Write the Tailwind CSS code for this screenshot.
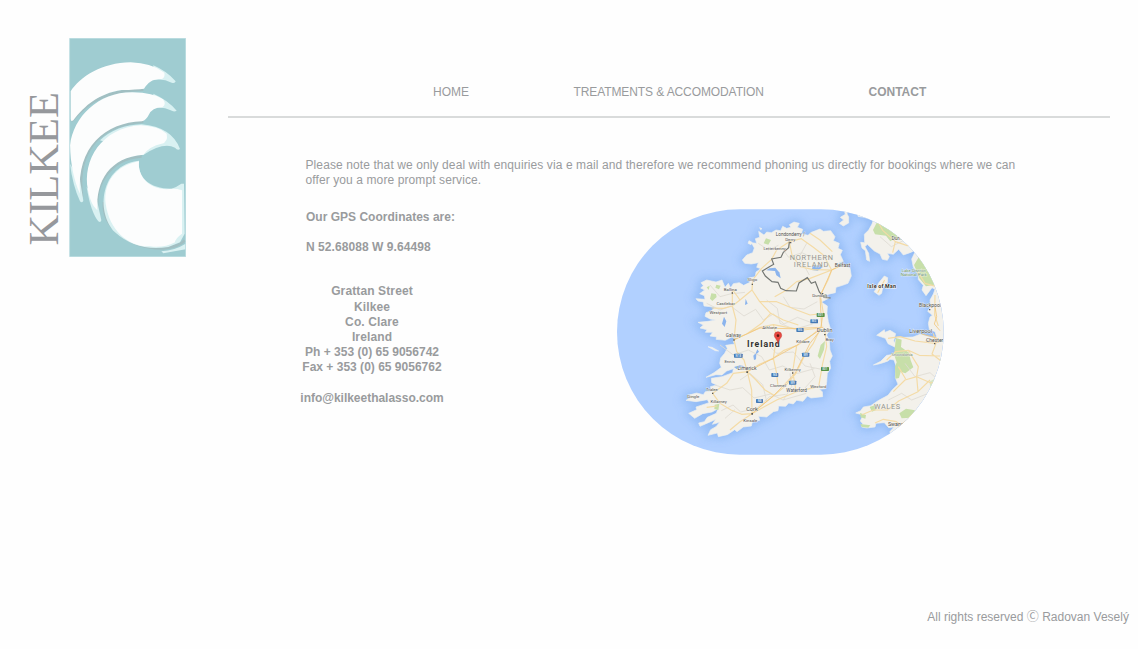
<!DOCTYPE html>
<html lang="en">
<head>
<meta charset="utf-8">
<title>Kilkee - Contact</title>
<script src="https://cdn.jsdelivr.net/npm/@tailwindcss/browser@4"></script>
</head>
<body class="bg-[#fefefe] text-[#999b9d] text-[12px] font-['Liberation_Sans',Arial,sans-serif]">
<div class="flex flex-col w-[1138px] h-[649px] overflow-hidden">
  <div class="flex grow">
    <aside class="w-[228px] shrink-0 pt-[38px] pl-[20px] flex items-start">
      <svg class="w-[48px] h-[219px] shrink-0" viewBox="20 38 48 219" role="img" aria-label="Kilkee">
        <text transform="translate(58 245.5) rotate(-90)" font-family="Liberation Serif, serif" font-size="43" textLength="153.5" lengthAdjust="spacingAndGlyphs" fill="#96989c">KILKEE</text>
      </svg>
      <svg class="w-[117px] h-[219px] ml-px shrink-0" viewBox="147 23 351 657">
        <rect x="149" y="24" width="348" height="655" fill="#9fccd1"/>
        <g fill="none" stroke="#a1bfc2" stroke-width="8">
          <path d="M155 272C210 205 270 180 370 178M186 500C172 400 205 285 370 274M237 560C215 470 265 385 365 378M252 515C245 590 330 656 430 654Q480 648 494 630"/>
        </g>
        <g fill="#d9f1f2">
          <path d="M400 105Q440 122 467 153Q465 160 455 157Q430 144 400 149Z"/>
          <path d="M400 190Q445 210 470 241Q462 246 452 240Q430 228 400 233Z"/>
          <path d="M240 330Q290 284 365 282Q455 290 480 356Q473 362 465 352Q430 334 370 374Z"/>
          <path d="M150 400Q158 465 180 513Q186 519 190 511L180 450Z"/>
          <path d="M200 470Q212 545 235 573Q242 578 244 570L231 510Z"/>
          <path d="M357 391C240 405 226 545 285 606Q350 665 445 650L480 636L494 610L492 460L484 460Q470 470 455 475C385 475 352 438 357 391Z"/>
          <path d="M424 663Q465 660 497 640V657L430 669Z"/>
        </g>
        <g fill="#fcfdfd">
          <path d="M152 183C180 140 245 97 332 96Q395 98 433 127Q436 140 426 146C395 145 385 157 372 175Q350 178 305 179C235 190 195 225 160 270Q152 276 152 265Z"/>
          <path d="M150 345C160 260 235 185 338 186Q400 187 429 207Q440 222 427 231Q396 232 386 254Q379 269 366 273C255 277 170 350 180 490C163 455 151 400 150 345Z"/>
          <path d="M204 480C186 390 245 292 362 285Q416 288 440 310Q445 335 425 340Q390 347 370 373C270 381 227 450 232 540C216 525 209 505 204 480Z"/>
          <path d="M357 393C285 405 250 460 257 520C268 600 325 650 390 648Q430 654 465 636Q465 625 486 610L486 480Q465 473 440 477C385 475 352 438 357 393Z"/>
        </g>
        <path d="M149 24H497V679H149Z" fill="none" stroke="#b4dade" stroke-width="2"/>
      </svg>
    </aside>

    <main class="w-[882px]">
      <nav class="h-[118px] pt-[84px] pl-[205px] flex items-start leading-[16px] border-b-2 border-[#d9dbdb]">
        <a class="w-[140.5px]">HOME</a>
        <a class="w-[295px] tracking-[-0.1px]">TREATMENTS &amp; ACCOMODATION</a>
        <a class="font-bold">CONTACT</a>
      </nav>
      <p class="mt-[40px] ml-[77.5px] leading-[15px] whitespace-nowrap tracking-[0.1px]">Please note that we only deal with enquiries via e mail and therefore we recommend phoning us directly for bookings where we can<br>offer you a more prompt service.</p>
      <div class="flex items-start mt-[21px] pl-[72px]">
        <section class="w-[317px] pt-px font-bold leading-[15.2px] tracking-[0.01px]">
          <div class="pl-[6px] whitespace-nowrap"><p>Our GPS Coordinates are:</p><p class="mt-[15px] tracking-[0.06px]">N 52.68088 W 9.64498</p></div>
          <address class="not-italic w-[144px] text-center mt-[29px] whitespace-nowrap"><span class="tracking-[0.12px]">Grattan Street<br>Kilkee<br>Co. Clare<br>Ireland</span><br>Ph + 353 (0) 65 9056742<br>Fax + 353 (0) 65 9056762<br><br><span class="tracking-[-0.02px]">info@kilkeethalasso.com</span></address>
        </section>
        <svg class="w-[327px] h-[246px] shrink-0" viewBox="21 27 981 738" font-family="Roboto, sans-serif">
          <defs>
            <clipPath id="pill"><rect x="21" y="28" width="980" height="736" rx="368"/></clipPath>
            <filter id="soft" x="-20%" y="-20%" width="140%" height="140%"><feGaussianBlur stdDeviation="13"/></filter>
            <path id="eire" d="M498 90L484 98 470 96 462 105 446 94 449 112 436 116 440 130 424 128 433 144 428 158 410 165 397 180 404 190 424 192 445 188 440 202 452 206 438 216 436 230 417 234 420 247 401 256 388 248 370 251 362 263 355 250 345 262 336 240 318 246 290 240 273 248 280 257 272 264 284 270 269 281 283 287 285 298 258 296 264 303 280 306 282 318 316 322 303 333 288 338 285 349 300 357 316 360 294 364 264 367 280 375 270 384 291 389 286 397 308 397 300 408 320 411 318 418 346 421 365 411 383 413 370 425 374 432 347 436 352 445 344 460 332 474 329 490 334 502 312 518 288 532 318 524 336 525 350 513 370 506 368 518 336 530 304 535 305 548 320 555 301 560 306 573 286 575 280 584 260 579 234 586 244 592 228 601 258 605 292 599 297 608 270 617 258 621 260 629 236 640 254 655 278 641 306 636 324 626 319 640 292 652 283 665 266 669 270 679 302 665 317 658 307 673 329 667 318 680 302 689 294 706 322 699 325 710 352 704 374 689 381 695 400 681 424 678 427 666 449 661 446 649 470 651 490 635 504 632 506 618 527 619 536 609 550 612 560 601 579 604 592 588 603 594 638 590 637 575 628 568 646 566 650 548 652 520 662 505 659 484 667 468 660 450 658 423 650 405 661 385 655 365 651 340 652 318 634 306 656 295 650 284 676 278 678 262 698 256 714 250 724 228 720 204 699 197 684 190 700 184 691 164 697 151 684 145 688 130 670 122 675 110 662 92 640 94 630 87 604 97 594 106 574 101 578 88 562 82 568 70 552 66 538 74 543 82 530 85 518 79 512 92Z"/>
            <path id="britain" d="M700 20L706 43 691 52 701 60 688 70 700 78 716 69 716 50 711 42 715 20ZM740 15L744 49 762 52 790 60 786 72 776 90 763 103 764 128 752 127 756 144 766 152 770 180 779 184 776 160 765 140 772 133 793 153 810 162 817 178 832 181 838 170 832 160 850 163 866 148 880 165 900 158 918 150 905 177 910 202 924 218 925 239 940 256 936 270 948 287 966 263 975 268 970 282 960 300 962 320 953 334 967 346 960 351 955 370 958 388 975 395 980 411 966 412 930 403 909 411 885 412 860 411 855 423 858 432 851 423 857 401 840 391 825 397 823 389 800 406 826 415 834 431 860 444 853 463 830 466 812 484 790 495 803 493 820 488 834 483 840 478 852 480 858 498 856 533 864 553 847 569 834 586 806 601 782 617 760 621 752 632 737 639 752 643 757 650 751 663 758 671 755 681 770 684 795 681 798 670 823 668 836 683 852 681 839 696 845 703 870 720 1040 740V10Z"/>
            <path id="man" d="M792 275L800 265 805 250 823 228 833 233 832 249 818 263 815 280 807 286Z"/>
          </defs>
          <g clip-path="url(#pill)">
            <rect x="20" y="26" width="984" height="742" fill="#b1d0ff"/>
            <g fill="#8bb6f2" stroke="#8db8f3" stroke-width="15" filter="url(#soft)" opacity=".85"><use href="#eire"/><use href="#britain"/><use href="#man"/></g>
            <g fill="#f3f1eb" stroke="#edf0f0" stroke-width="2" stroke-linejoin="round"><use href="#eire"/><use href="#britain"/><use href="#man"/><path d="M417 122l9 5-3 7-9-4zM294 440l12 2 20 11-10-1zM449 83l7 3-4 3z"/></g>
            <g fill="#c7dfa9">
              <path d="M468 115l15 5-8 14-14-4zM304 280l14 2 2 9-13 12-7-7zM319 254l13 3-5 11-11-5zM290 262l9-5-3 13zM632 435l13-12-3 26-12 28-7-9zM314 614l14-3-3 19-12-3z"/>
              <path d="M800 68l34 1 5 15 27 12-6 18-19 10-13-17-33-4-6-13zM912 195l14-23 22 10 7 29 19 22-1 21-25 5-20-24zM858 414l17 5-2 22 24 17 5 23 8 21-24 18-14-5-5 19-11 2-1-36 5-13-8-24zM750 639l18 6-2 11-14-4zM751 672l30 4-6 7-20-2zM779 621l23-8-4 17-12 5zM868 640l20-14 27 5-14 22-26 2z"/>
              <path d="M958 545l16-9 4 16-16 12zM988 480l12-9v18z" opacity=".6"/>
            </g>
            <g fill="#8bb4ed"><path d="M607 199l26-5 5 8-15 10-18-2zM432 480l6-2 1-15 8-8-5-7-5 12-7 7zM372 501l18-5 14 3-24 8zM407 296l6 15-8 4zM342 350l7 14-5 17-8-10zM469 211l9-6 18-2 10 12-12-2zM493 208l15 8 4 19-13-9z"/></g>
            <g fill="none" stroke="#dedbd3" stroke-width="2.5">
              <path d="M290 310l40 20 32-12 40 30 35-20 23 32 30-18 32 30 40-20 40 15M330 435l40 30 45-15 40 20 23 40 40-12 45 22 50-14M315 555l45 15 38-7 34 31 50-12 37 18 70-20M334 632l35-17 23 21 48-11 39-35 48-7M514 142l22 30 40-14 44 22 38-12M470 300l32 25 8 45 43 18 55-16M810 110l34 30 40-20 58 20M885 490l30 40 45-12 34 30M835 600l40-20 30 20 60-24"/>
              <path d="M445 130l30 20 30-14M300 255l30 35 30-8 45-5M520 290l20 32 42 5 40-22M470 430l30 30 50-4 35 42 50 10M390 540l30-20 38 34 12 50M345 655l30-26M590 130l-22 40 30 55M600 490l15 40-30 34M540 520l5 40-25 40"/>
            </g>
            <g fill="none" stroke="#f4dba6" stroke-width="3.5" stroke-linejoin="round">
              <path d="M632 384L580 390 533 382 490 374 450 382 410 402 372 419M632 384L600 410 560 437 520 452 490 475 450 492 412 515M632 384L610 430 582 470 558 520 524 560 492 586 450 620 426 641M632 384L640 340 631 285 654 240 665 210M665 210L700 192M665 210L640 165 610 142 574 116 538 125 500 150 485 178 455 205 428 240 426 270 390 300 367 318 340 325 305 324M426 270L449 305 482 340 520 360 565 375M372 419L380 455 402 480 412 515 370 520 350 550 308 580 330 610 363 630 395 643 426 641M367 268L367 318 378 360 372 419M426 641L460 622 500 600 560 575 626 560M412 515L438 540 465 570 492 586M538 125L546 165 570 200 610 209 664 210M600 100L630 120 667 155M482 340L455 370 410 402M645 396L650 440 638 490 626 560M322 618L290 622M360 690L389 666 426 641M367 268L390 300M494 290L530 270 560 245 600 235 665 210M449 305L500 305 560 330 600 345 640 340M490 374L500 410 490 475M560 437L548 515 558 572M490 475L500 520 504 560M412 515L425 570 426 641"/>
              <path d="M804 65L818 91 856 125 892 137 937 118M848 158L856 125M970 400L978 430 966 462 997 486M834 415L870 410 915 423 975 430M830 480L857 455 895 451 928 466 990 468M850 575L885 540 920 530 963 549 1000 540M756 644L790 630 832 630 866 603 924 575 960 540M795 669L820 658 859 665 880 680 900 650 932 620M920 210L945 250 980 260M975 285L974 345 985 378M887 537L865 500M803 278L824 240M895 451L925 500 920 530 924 575"/>
            </g>
            <g fill="none" stroke="#f2c77d" stroke-width="2.5"><path d="M372 419L450 384 540 386 640 382M412 515L490 475 560 436 632 388M426 641L490 588 555 520 600 430 632 390M635 380L630 290 665 210 700 193M935 402L980 414 986 427 947 422M975 320L980 350 973 372 990 392M864 679L900 655"/></g>
            <path d="M538 125l-2 18-16 14-7 15-28 5 6 16-14 8-20 12 9 15 20 17 18 2 8 18 16 7 31 1 8-24 25-16 12 17 12-5 12 31 14 16 20 2" fill="none" stroke="#737672" stroke-width="3.5"/>
            <g fill="#4479b5"><rect x="372" y="461" width="26" height="12" rx="2"/><rect x="484" y="519" width="21" height="12" rx="2"/><rect x="438" y="597" width="21" height="12" rx="2"/><rect x="537" y="542" width="22" height="12" rx="2"/><rect x="576" y="458" width="22" height="12" rx="2"/><rect x="559" y="384" width="22" height="12" rx="2"/><rect x="601" y="358" width="23" height="12" rx="2"/></g>
            <g fill="#569245"><rect x="620" y="339" width="24" height="12" rx="2"/><rect x="633" y="501" width="24" height="12" rx="2"/></g>
            <g fill="#d6e4f4" font-size="9" font-weight="700" text-anchor="middle"><text x="385" y="470">N18</text><text x="495" y="528">N8</text><text x="449" y="606">N8</text><text x="548" y="551">M9</text><text x="587" y="467">M9</text><text x="570" y="393">M6</text><text x="612" y="367">M3</text><text x="632" y="348">E01</text><text x="645" y="510">E01</text></g>
            <g fill="#4c4c4a" stroke="#faf8f3" stroke-width="2" paint-order="stroke" font-size="13" text-anchor="middle">
              <text x="541" y="108" font-size="14">Londonderry /</text><text x="541" y="122" font-size="13">Derry</text><text x="494" y="149">Letterkenny</text><text x="698" y="201" font-size="15">Belfast</text><text x="427" y="244">Sligo</text><text x="361" y="273">Ballina</text><text x="347" y="316">Castlebar</text><text x="325" y="342">Westport</text><text x="479" y="387">Athlone</text><text x="370" y="411" font-size="14">Galway</text><text x="359" y="490">Ennis</text><text x="411" y="509" font-size="15">Limerick</text><text x="306" y="574">Tralee</text><text x="250" y="595">Dingle</text><text x="326" y="609">Killarney</text><text x="426" y="634" font-size="17">Cork</text><text x="421" y="665">Kinsale</text><text x="504" y="562">Clonmel</text><text x="548" y="512">Kilkenny</text><text x="560" y="577" font-size="14">Waterford</text><text x="625" y="564">Wexford</text><text x="579" y="430">Kildare</text><text x="659" y="424">Bray</text><text x="644" y="397" font-size="17">Dublin</text><text x="630" y="291">Dundalk</text>
              <text x="960" y="320" font-size="15">Blackpool</text><text x="932" y="400" font-size="17">Liverpool</text><text x="974" y="425" font-size="15">Chester</text><text x="876" y="467" fill="#71856e">Snowdonia</text><text x="866" y="677" font-size="16">Swansea</text><text x="875" y="119" font-size="15">Dumfries</text>
              <text x="911" y="217" fill="#568c69" font-size="13">Lake District</text><text x="911" y="229" fill="#568c69" font-size="13">National Park</text>
            </g>
            <g fill="#5a5a58"><path d="M539 126h5v4h-5zM370 418h4v4h-4zM409 514h5v5h-5zM424 639h5v5h-5zM642 402h5v4h-5zM546 517h4v4h-4zM365 277h4v4h-4zM425 251h4v4h-4zM306 578h4v4h-4zM636 279h4v4h-4zM957 327h4v4h-4zM972 429h4v4h-4z"/></g>
            <g fill="#949590" stroke="#f4f1e9" stroke-width="2" paint-order="stroke" font-size="22"><text x="539" y="181" textLength="130">NORTHERN</text><text x="551" y="200" textLength="104">IRELAND</text><text x="792" y="627" textLength="78">WALES</text></g>
            <g fill="#30302f" stroke="#f8f6ef" stroke-width="3" paint-order="stroke" font-weight="700"><text x="411" y="441" font-size="26" textLength="98">Ireland</text><text x="772" y="263" font-size="16" textLength="86">Isle of Man</text></g>
            <path d="M504 431C501 416 493 414 493 406A11 11 0 1 1 515 406C515 414 507 416 504 431Z" fill="#ea4940" stroke="#ba3b34" stroke-width="1.5"/><circle cx="504" cy="407" r="4" fill="#651915"/>
          </g>
        </svg>
      </div>
    </main>
  </div>
  <footer class="h-[40px] pr-[9px] flex justify-end items-start leading-[16px]"><p class="whitespace-nowrap tracking-[0.01px]">All rights reserved <span class="font-['Noto_Sans_CJK_JP',sans-serif] leading-none">Ⓒ</span> Radovan Veselý</p></footer>
</div>
</body>
</html>
